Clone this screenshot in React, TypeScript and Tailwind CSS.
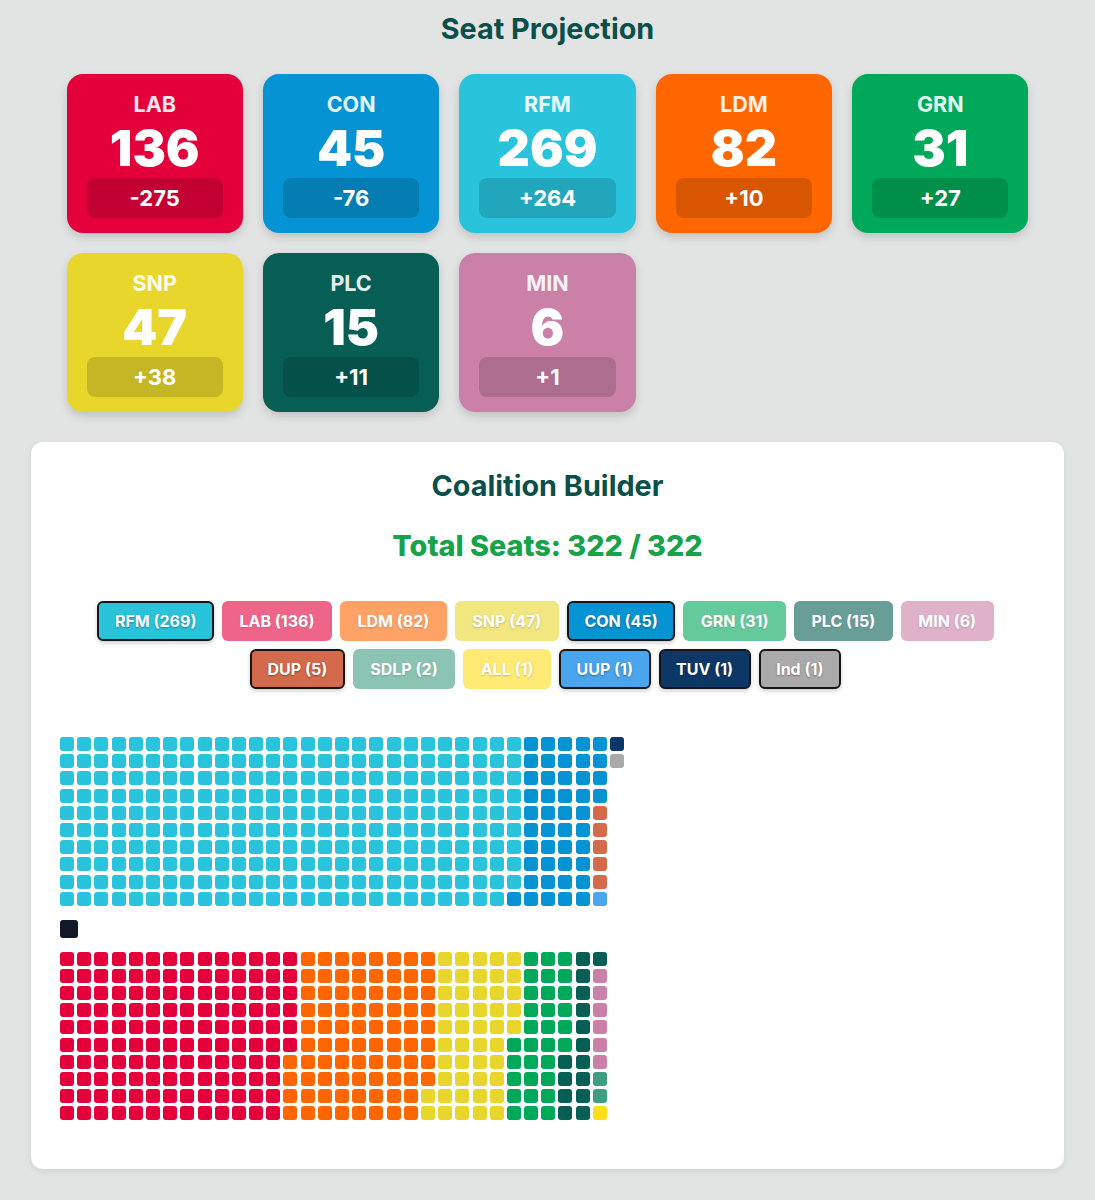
import React from "react";

type Party = {
    code: string;
    seats: number;
    change: string;
    color: string;
};

const PROJECTION: Party[] = [
    { code: "LAB", seats: 136, change: "-275", color: "#e4003b" },
    { code: "CON", seats: 45, change: "-76", color: "#0593d3" },
    { code: "RFM", seats: 269, change: "+264", color: "#29c4dc" },
    { code: "LDM", seats: 82, change: "+10", color: "#ff6600" },
    { code: "GRN", seats: 31, change: "+27", color: "#00a859" },
    { code: "SNP", seats: 47, change: "+38", color: "#e8d62c" },
    { code: "PLC", seats: 15, change: "+11", color: "#065e55" },
    { code: "MIN", seats: 6, change: "+1", color: "#cb80a8" },
];

const COALITION = [
    { code: "RFM", seats: 269, color: "#29c4dc", selected: true },
    { code: "LAB", seats: 136, color: "#e4003b", selected: false },
    { code: "LDM", seats: 82, color: "#ff6600", selected: false },
    { code: "SNP", seats: 47, color: "#e8d62c", selected: false },
    { code: "CON", seats: 45, color: "#0593d3", selected: true },
    { code: "GRN", seats: 31, color: "#00a859", selected: false },
    { code: "PLC", seats: 15, color: "#065e55", selected: false },
    { code: "MIN", seats: 6, color: "#cb80a8", selected: false },
    { code: "DUP", seats: 5, color: "#d46a4c", selected: true },
    { code: "SDLP", seats: 2, color: "#3f9e82", selected: false },
    { code: "ALL", seats: 1, color: "#fedd1b", selected: false },
    { code: "UUP", seats: 1, color: "#48a5ee", selected: true },
    { code: "TUV", seats: 1, color: "#0c3767", selected: true },
    { code: "Ind", seats: 1, color: "#aaaaaa", selected: true },
];

function cellsFor(selected: boolean): string[] {
    const out: string[] = [];
    COALITION.filter((p) => p.selected === selected).forEach((p) => {
        for (let i = 0; i < p.seats; i++) out.push(p.color);
    });
    return out;
}

export default function App() {
    const selectedCells = cellsFor(true);
    const otherCells = cellsFor(false);

    return (
        <div className="min-h-[1200px] bg-[#e2e4e3] px-[31px] pt-[11px] pb-8 font-['Inter',sans-serif]">
            <h1 className="mb-[27px] text-center text-[28.8px] leading-9 font-bold text-[#0a4f49]">
                Seat Projection
            </h1>

            <div className="mx-auto grid w-[962px] grid-cols-5 gap-5">
                {PROJECTION.map((p) => (
                    <SeatCard key={p.code} party={p} />
                ))}
            </div>

            <section className="mt-[30px] rounded-xl bg-white pt-[26px] pb-[49px] shadow-[0_2px_6px_rgba(0,0,0,0.08)]">
                <h2 className="text-center text-[28.8px] leading-9 font-bold text-[#0a4f49]">
                    Coalition Builder
                </h2>
                <p className="mt-[26px] text-center text-[28.8px] leading-8 font-extrabold text-[#16a34a]">
                    Total Seats: 322 / 322
                </p>

                <div className="mx-auto mt-[39px] flex w-[920px] flex-wrap justify-center gap-2 pr-1">
                    {COALITION.map((p) => (
                        <button
                            key={p.code}
                            type="button"
                            className={
                                p.selected
                                    ? "rounded-md border-2 border-[#161616] px-[15.5px] py-[6px] text-base leading-6 font-bold text-white shadow-[0_2px_4px_rgba(0,0,0,0.2)] [text-shadow:0_1px_2px_rgba(0,0,0,0.35)]"
                                    : "rounded-md border-2 border-transparent px-[15.5px] py-[6px] text-base leading-6 font-bold text-white opacity-60 [text-shadow:0_1px_2px_rgba(0,0,0,0.35)]"
                            }
                            style={{ backgroundColor: p.color }}
                        >
                            {p.code} ({p.seats})
                        </button>
                    ))}
                </div>

                <div className="mt-12 pl-[29px]">
                    <Waffle cells={selectedCells} />
                    <div className="my-[14px] h-[18px] w-[18px] rounded-[3px] bg-[#111827]" />
                    <Waffle cells={otherCells} />
                </div>
            </section>
        </div>
    );
}

function SeatCard({ party }: { party: Party }) {
    return (
        <div
            className="flex h-[159px] flex-col items-center rounded-2xl px-5 pt-4 text-white shadow-[0_4px_8px_rgba(0,0,0,0.15)]"
            style={{ backgroundColor: party.color }}
        >
            <span className="text-[21.5px] leading-7 font-bold text-white/90">
                {party.code}
            </span>
            <span className="mt-[5px] text-[50px] leading-[50px] font-black">
                {party.seats}
            </span>
            <span className="mt-[5px] flex h-10 w-full items-center justify-center rounded-lg bg-black/15 text-[22px] font-bold">
                {party.change}
            </span>
        </div>
    );
}

function Waffle({ cells }: { cells: string[] }) {
    return (
        <div className="grid auto-cols-[14px] grid-flow-col grid-rows-[repeat(10,14px)] gap-[3.2px]">
            {cells.map((c, i) => (
                <div
                    key={i}
                    className="h-[14px] w-[14px] rounded-[3px]"
                    style={{ backgroundColor: c }}
                />
            ))}
        </div>
    );
}
